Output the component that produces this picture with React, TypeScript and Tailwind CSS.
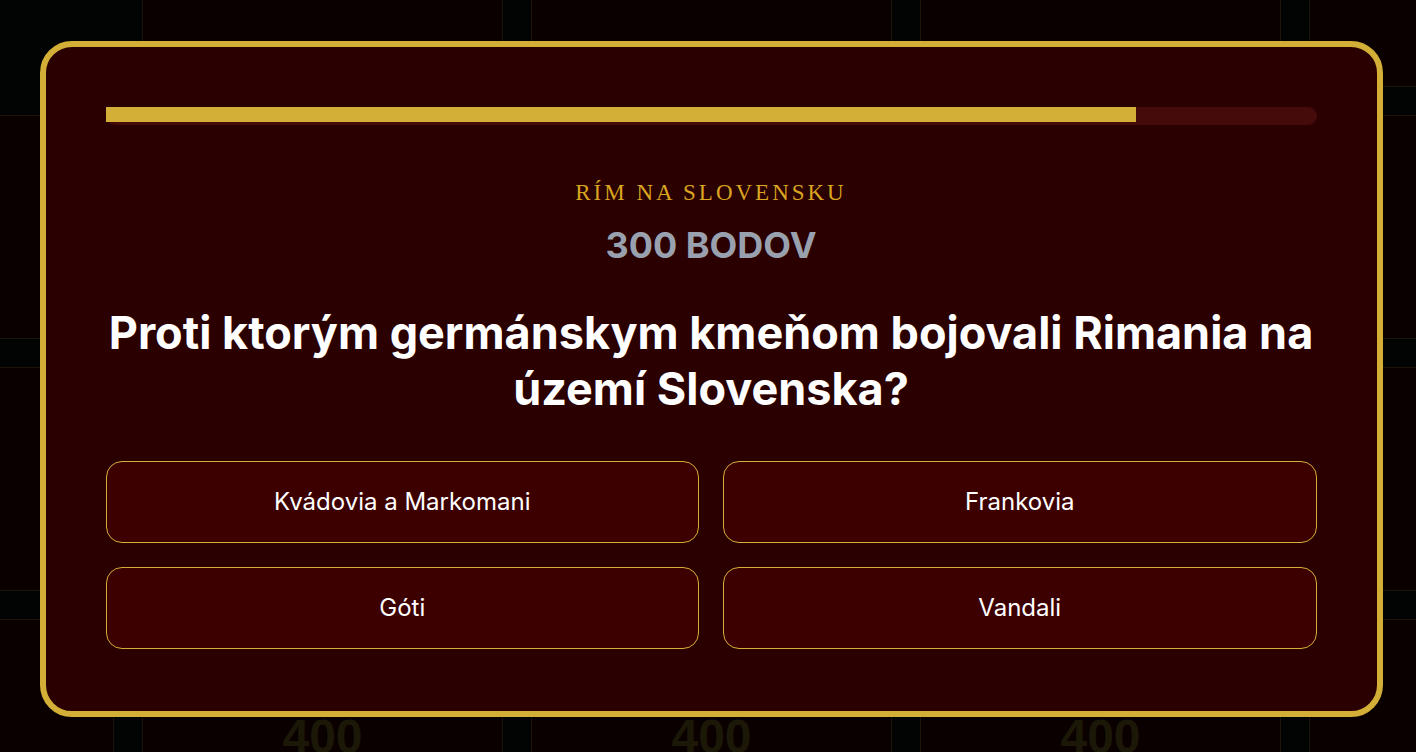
const columns = [0, 1, 2, 3, 4]
const rows = [100, 200, 300, 400]

const answers = ['Kvádovia a Markomani', 'Frankovia', 'Góti', 'Vandali']

function Board() {
  return (
    <div className="flex h-screen w-full justify-center overflow-hidden bg-[#020303] pl-[7px]">
      <div className="-mt-[137px] grid shrink-0 grid-cols-[repeat(5,361px)] gap-x-[28px] gap-y-[28px]">
        {columns.map((c) =>
          c === 0 ? (
            <div key={'h' + c} className="h-[224px]" />
          ) : (
            <div key={'h' + c} className="h-[224px] border border-[#1a1506] bg-[#0b0000]" />
          )
        )}
        {rows.slice(0, 3).map((r, i) =>
          columns.map((c) => (
            <div
              key={r + '-' + c}
              className="flex h-[224px] items-center justify-center border border-[#1a1506] bg-[#0b0000]"
            >
              <span className="pt-[12px] font-['Liberation_Sans',sans-serif] text-[48px] font-bold text-[#1c1808]">
                {(i + 2) * 100}
              </span>
            </div>
          ))
        )}
      </div>
    </div>
  )
}

export default function App() {
  const progress = 85.1

  return (
    <div className="relative h-screen w-full overflow-hidden">
      <Board />

      <div className="fixed inset-0 flex items-center justify-center pl-[6px] pt-[5px]">
        <div className="w-[1343px] rounded-[32px] border-[6px] border-[#d4af37] bg-[#2a0000] px-[60px] pb-[62px] pt-[60px] text-center font-['Inter',sans-serif]">
          <div className="h-[18px] w-full rounded-full bg-[#450b0b]">
            <div className="h-[15px] bg-[#d4af37]" style={{ width: progress + '%' }} />
          </div>

          <div className="mt-[52px] font-['Liberation_Serif',serif] text-[23px] uppercase leading-8 tracking-[0.13em] text-[#daa520]">
            Rím na Slovensku
          </div>

          <div className="mt-[16px] text-[36px] font-bold leading-10 text-[#99a1af]">300 BODOV</div>

          <h2 className="mx-auto mt-[40px] text-[45px] font-bold leading-[56px] text-white">
            Proti ktorým germánskym kmeňom bojovali Rimania na území Slovenska?
          </h2>

          <div className="mt-[44px] grid grid-cols-2 gap-6">
            {answers.map((a) => (
              <button
                key={a}
                className="flex h-[82px] items-center justify-center rounded-2xl border border-[#d4af37] bg-[#3d0000] text-[24px] text-white"
              >
                {a}
              </button>
            ))}
          </div>
        </div>
      </div>
    </div>
  )
}
